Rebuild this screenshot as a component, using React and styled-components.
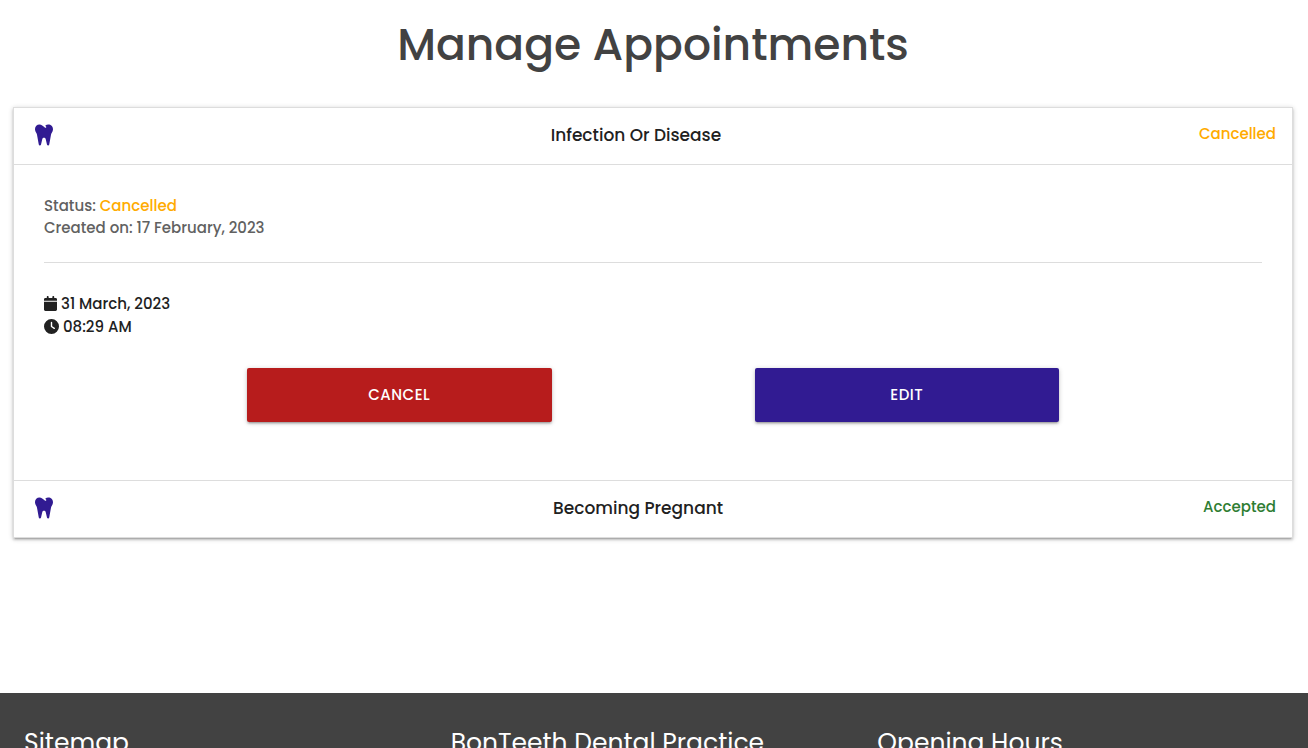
import React from "react";
import styled, { createGlobalStyle } from "styled-components";
import { FaCalendar, FaClock, FaTooth } from "react-icons/fa6";

const GlobalStyle = createGlobalStyle`
  *, *::before, *::after { box-sizing: border-box; }
  html { scrollbar-width: none; }
  body {
    margin: 0;
    background: #fff;
    color: #212121;
    font-family: Poppins, Inter, sans-serif;
    font-size: 15px;
    font-weight: 500;
    line-height: 22px;
  }
  h1, h2, p, ul { margin: 0; padding: 0; font-weight: 500; }
`;

const Main = styled.main`
  padding: 16px 15px 0 13px;
`;

const PageTitle = styled.h1`
  margin-bottom: 33px;
  color: #424242;
  font-size: 44px;
  line-height: 58px;
  text-align: center;
`;

const Collapsible = styled.ul`
  list-style: none;
  border: 1px solid #ddd;
  border-bottom: 0;
  box-shadow: 0 2px 2px 0 rgba(0, 0, 0, 0.14), 0 3px 1px -2px rgba(0, 0, 0, 0.12),
    0 1px 5px 0 rgba(0, 0, 0, 0.2);
`;

const Header = styled.button`
  display: flex;
  align-items: flex-start;
  justify-content: space-between;
  width: 100%;
  padding: 14px 16px;
  border: 0;
  border-bottom: 1px solid #ddd;
  background: #fff;
  color: inherit;
  font: inherit;
  cursor: pointer;
`;

const ToothSlot = styled.span`
  display: flex;
  justify-content: center;
  align-items: center;
  width: 28px;
  height: 26px;
  margin-right: 15px;
  color: #311b92;
  font-size: 24px;
`;

const HeaderTitle = styled.span`
  height: 28px;
  font-size: 17px;
  line-height: 26px;
`;

const STATUS_COLORS = { Cancelled: "#ffab00", Accepted: "#2e7d32" };

const Status = styled.span`
  color: ${({ $status }) => STATUS_COLORS[$status]};
`;

const HeaderStatus = styled(Status)`
  line-height: 24px;
`;

const Body = styled.div`
  padding: 30px 30px 58px;
  border-bottom: 1px solid #ddd;
`;

const Meta = styled.div`
  padding-bottom: 23px;
  border-bottom: 1px solid #ddd;
  color: #616161;
`;

const Schedule = styled.div`
  padding: 29px 0 30px;
`;

const ScheduleLine = styled.p`
  display: flex;
  align-items: center;
  gap: 4px;
  line-height: 23px;
`;

const CalendarIcon = styled(FaCalendar)`
  width: 13px;
  height: 15px;
`;

const ClockIcon = styled(FaClock)`
  width: 15px;
  height: 15px;
`;

const Actions = styled.div`
  display: flex;
  justify-content: space-evenly;
`;

const ActionButton = styled.button`
  width: 25%;
  height: 54px;
  padding: 0 16px;
  border: 0;
  border-radius: 2px;
  background: ${({ $color }) => $color};
  color: #fff;
  font: inherit;
  letter-spacing: 0.5px;
  text-transform: uppercase;
  cursor: pointer;
  box-shadow: 0 2px 2px 0 rgba(0, 0, 0, 0.14), 0 3px 1px -2px rgba(0, 0, 0, 0.12),
    0 1px 5px 0 rgba(0, 0, 0, 0.2);
`;

const Footer = styled.footer`
  display: grid;
  grid-template-columns: repeat(3, 1fr);
  margin-top: 155px;
  padding: 36px 16px 36px 12px;
  background: #424242;
  color: #fff;
`;

const FooterTitle = styled.h2`
  padding: 0 12px;
  font-size: 25px;
  font-weight: 400;
  line-height: 27px;
`;

function AppointmentHeader({ title, status, open }) {
  return (
    <Header type="button" aria-expanded={open}>
      <ToothSlot>
        <FaTooth />
      </ToothSlot>
      <HeaderTitle>{title}</HeaderTitle>
      <HeaderStatus $status={status}>{status}</HeaderStatus>
    </Header>
  );
}

export default function App() {
  return (
    <>
      <GlobalStyle />
      <Main>
        <PageTitle>Manage Appointments</PageTitle>
        <Collapsible>
          <li>
            <AppointmentHeader title="Infection Or Disease" status="Cancelled" open />
            <Body>
              <Meta>
                <p>
                  Status: <Status $status="Cancelled">Cancelled</Status>
                </p>
                <p>Created on: 17 February, 2023</p>
              </Meta>
              <Schedule>
                <ScheduleLine>
                  <CalendarIcon />
                  31 March, 2023
                </ScheduleLine>
                <ScheduleLine>
                  <ClockIcon />
                  08:29 AM
                </ScheduleLine>
              </Schedule>
              <Actions>
                <ActionButton type="button" $color="#b71c1c">Cancel</ActionButton>
                <ActionButton type="button" $color="#311b92">Edit</ActionButton>
              </Actions>
            </Body>
          </li>
          <li>
            <AppointmentHeader title="Becoming Pregnant" status="Accepted" open={false} />
          </li>
        </Collapsible>
      </Main>
      <Footer>
        <FooterTitle>Sitemap</FooterTitle>
        <FooterTitle>BonTeeth Dental Practice</FooterTitle>
        <FooterTitle>Opening Hours</FooterTitle>
      </Footer>
    </>
  );
}
